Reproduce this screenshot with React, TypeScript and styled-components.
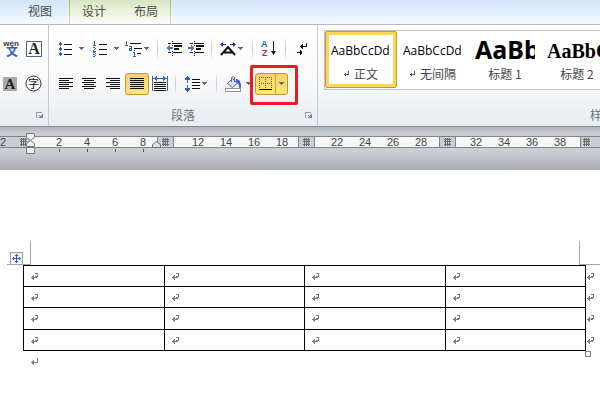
import React from "react";
import styled, { createGlobalStyle, css } from "styled-components";

const GlobalStyle = createGlobalStyle`
  * { box-sizing: border-box; }
  html { overflow: hidden; }
  body {
    margin: 0;
    background: #fff;
    font-family: "Liberation Sans", "Noto Sans CJK SC", sans-serif;
    font-size: 12px;
    line-height: 16px;
    color: #444;
  }
  button { font: inherit; color: inherit; border: 0; padding: 0; background: none; }
  svg { display: block; flex: none; }
`;

/* ---------- tabs ---------- */

const TabBar = styled.nav`
  display: flex;
  height: 25px;
  overflow: hidden;
  border-bottom: 1px solid #b4b8c2;
  background: linear-gradient(#d3e6fa, #e2effc 50%, #f7fbff);
`;

const Tab = styled.button`
  height: 21px;
  padding: 0 14px;
  font-family: "Noto Sans CJK SC", sans-serif;
  color: #4a4a4a;
`;

const MainTabs = styled.div`
  display: flex;
  padding-left: 14px;
  padding-right: 3px;
`;

const ContextTabs = styled.div`
  display: flex;
  border-style: solid;
  border-width: 0 1px;
  border-image: linear-gradient(#a9b04c, #dfe4b4) 1;
  background: linear-gradient(#d5e5bd, #ebf3df 50%, #fbfdf9);
  ${Tab} { padding: 0 12px; }
  ${Tab} + ${Tab} { padding-left: 16px; }
`;

/* ---------- ribbon ---------- */

const Ribbon = styled.section`
  display: flex;
  height: 101px;
  overflow: hidden;
  background: linear-gradient(#fff, #fbfbfc 45%, #f1f3f5 75%, #e8ecf0);
`;

const Group = styled.div<{ $w?: number }>`
  ${(p) => (p.$w ? css`flex: 0 0 ${p.$w}px;` : css`flex: 1 0 0; min-width: 0;`)}
  display: flex;
  flex-direction: column;
  border-right: ${(p) => (p.$w ? "1px solid #c3c9d1" : "0")};
`;

const ToolRow = styled.div`
  display: flex;
  align-items: center;
  height: 35px;
`;

const FirstRow = styled(ToolRow)`
  margin-top: 6px;
`;

const Tool = styled.button<{ $w: number; $gap?: number }>`
  display: flex;
  align-items: center;
  justify-content: space-between;
  flex: none;
  width: ${(p) => p.$w}px;
  height: 22px;
  margin-left: ${(p) => p.$gap ?? 0}px;
  padding: 0 2px;
`;

const gold = css`
  border: 1px solid #c2953c;
  border-radius: 3px;
  background: linear-gradient(#fbd272, #fddc70 60%, #fee978);
`;

const ActiveTool = styled(Tool)`
  ${gold}
  justify-content: center;
  padding: 0;
`;

const Divider = styled.span<{ $gap: number }>`
  flex: none;
  width: 1px;
  height: 20px;
  margin-left: ${(p) => p.$gap}px;
  background: linear-gradient(#ececf0, #c4c8ce 50%, #ececf0);
`;

const Split = styled.div`
  ${gold}
  position: relative;
  display: flex;
  width: 33px;
  height: 22px;
  margin-left: 2px;
`;

const SplitPart = styled.button<{ $w: number }>`
  display: flex;
  align-items: center;
  justify-content: center;
  width: ${(p) => p.$w}px;
  & + & { border-left: 1px solid #c9a04a; }
`;

const Highlight = styled.span`
  position: absolute;
  inset: -9px -11px -11px -6px;
  border: 3px solid #ed1c24;
  border-radius: 2px;
  pointer-events: none;
`;

const GroupFooter = styled.div`
  flex: 1;
  display: grid;
  grid-template-columns: 14px 1fr 14px;
  align-items: center;
  justify-items: center;
  padding: 3px 2px 0;
  font-family: "Noto Sans CJK SC", sans-serif;
  color: #6b7480;
`;

const Launcher = styled.button`
  grid-column: 3;
`;

const StyleLabel = styled.div`
  display: flex;
  align-items: center;
  justify-content: flex-end;
  height: 22px;
  margin-top: auto;
  margin-right: -14px;
  font-family: "Noto Sans CJK SC", sans-serif;
  color: #6b7480;
`;

/* ---------- style gallery ---------- */

const Gallery = styled.div`
  display: flex;
  height: 60px;
  margin: 5px 0 0 6px;
  overflow: hidden;
  border: 1px solid #c0c3c8;
  border-right: 0;
  background: #fff;
`;

const StyleCard = styled.button<{ $active?: boolean }>`
  flex: 0 0 72px;
  min-width: 0;
  display: flex;
  flex-direction: column;
  align-items: center;
  height: 57px;
  padding: 0 2px;
  border: 4px solid transparent;
  ${(p) =>
    p.$active &&
    css`
      border: 1px solid #c29a35;
      border-radius: 2px;
      box-shadow: inset 0 0 0 3px #fbd65f;
      padding: 3px 5px;
    `}
`;

const Sample = styled.span<{ $kind: "body" | "h1" | "h2" }>`
  width: 100%;
  height: 30px;
  overflow: hidden;
  white-space: nowrap;
  text-align: left;
  color: #000;
  ${(p) => p.$kind === "body" && css`font: 12px/32px "Open Sans", sans-serif;`}
  ${(p) => p.$kind === "h1" && css`font: bold 25px/28px "Noto Sans", sans-serif;`}
  ${(p) => p.$kind === "h2" && css`font: bold 20px/32px "Liberation Serif", serif;`}
`;

const StyleName = styled.span`
  display: flex;
  align-items: center;
  gap: 4px;
  height: 20px;
  white-space: nowrap;
  font-family: "Noto Sans CJK SC", sans-serif;
  color: #444;
`;

/* ---------- ruler ---------- */

const RulerArea = styled.div`
  height: 44px;
  padding-top: 9px;
  border-top: 1px solid #858b91;
  background: linear-gradient(#b0b5ba, #cbcfd4 7px, #cbcfd4 24px, #a8adb3);
`;

const Ruler = styled.div`
  position: relative;
  display: flex;
  height: 12px;
  border: solid #7d8590;
  border-width: 1px 0;
  background: #cbcfd5;
  font: 11px/10px "Liberation Sans", sans-serif;
  color: #444;
`;

const StartMargin = styled.div`
  flex: 0 0 31px;
  display: flex;
  align-items: center;
  justify-content: space-between;
  padding-right: 4px;
`;

const ColumnGap = styled.div`
  flex: 0 0 17px;
  display: flex;
  align-items: center;
  justify-content: center;
  border: solid #7d8590;
  border-width: 0 1px;
`;

const EndMargin = styled.div`
  flex: 0 0 22px;
  display: flex;
  align-items: center;
  padding-left: 2px;
  border-left: 1px solid #7d8590;
`;

const Span = styled.div<{ $pad: number }>`
  flex: 1 0 124px;
  display: flex;
  padding-left: ${(p) => p.$pad}px;
  background: #f7f7f8;
`;

const Mark = styled.span<{ $tick?: boolean }>`
  flex: 0 0 28px;
  display: flex;
  flex-direction: column;
  align-items: center;
  height: 10px;
  ${(p) =>
    p.$tick &&
    css`
      &::after {
        content: "";
        flex: none;
        width: 1px;
        height: 3px;
        margin-top: 2px;
        background: #555;
      }
    `}
`;

const IndentMarker = styled.span<{ $x: number; $y: number }>`
  position: absolute;
  left: ${(p) => p.$x}px;
  top: ${(p) => p.$y}px;
`;

/* ---------- document ---------- */

const Page = styled.main`
  padding-top: 71px;
  padding-left: 23px;
  background: #fff;
`;

const Corners = styled.div`
  display: flex;
  justify-content: space-between;
  height: 24px;
  margin-left: -16px;
`;

const Corner = styled.div<{ $right?: boolean }>`
  display: flex;
  align-items: flex-end;
  width: ${(p) => (p.$right ? 21 : 24)}px;
  padding-left: 3px;
  border-bottom: 1px solid #a8a8a8;
  ${(p) => (p.$right ? "border-left" : "border-right")}: 1px solid #a8a8a8;
`;

const Handle = styled.button`
  display: grid;
  place-items: center;
  width: 13px;
  height: 13px;
  margin-bottom: -1px;
  border: 1px solid #a0a0a0;
  background: #f3f4f6;
`;

const Table = styled.table`
  width: 100%;
  table-layout: fixed;
  border-collapse: collapse;
`;

const Cell = styled.td`
  height: 21px;
  padding: 0 0 0 7px;
  border: 1px solid #000;
  tr:nth-child(3) > & { height: 22px; }
`;

const EndCell = styled.td`
  padding: 0 0 0 1px;
`;

const AfterTable = styled.div`
  display: flex;
  align-items: flex-start;
  justify-content: space-between;
  padding: 0 9px 0 8px;
`;

const ResizeBox = styled.span`
  width: 6px;
  height: 6px;
  border: 1px solid #858585;
`;

const LastMark = styled.div`
  padding-top: 7px;
`;

/* ---------- drawings ---------- */

type DrawProps = { w: number; h: number; children: React.ReactNode; soft?: boolean };
const Draw = ({ w, h, children, soft }: DrawProps) => (
  <svg width={w} height={h} viewBox={`0 0 ${w} ${h}`} fill="none" shapeRendering={soft ? "auto" : "crispEdges"} aria-hidden="true">
    {children}
  </svg>
);

const Caret = () => (
  <Draw w={5} h={3}><path d="M0 0h5v1H0zM1 1h3v1H1zM2 2h1v1H2z" fill="#666" /></Draw>
);

const BLUE = "#2f5fc0";

const Bullets = () => (
  <Draw w={14} h={14}>
    <path d="M5 2.5h8M5 7.5h8M5 12.5h8" stroke="#111" />
    <path d="M0 1h3v2H0zM1 0h1v4H1zM0 6h3v2H0zM1 5h1v4H1zM0 11h3v2H0zM1 10h1v4H1z" fill={BLUE} />
  </Draw>
);

const Numbers = () => (
  <Draw w={15} h={16}>
    <path d="M6 3.5h8M6 8.5h8M6 13.5h8" stroke="#111" />
    <path d="M1 0h1v4h1v1H0V4h1V1H0zM0 6h2v1h1v1H2v1H1v1h2v1H0V9h1V8h1V7H0zM0 11h2v1h1v1H2v1h1v1H2v1H0v-1h2v-1H0v-1h2v-1H0z" fill={BLUE} />
  </Draw>
);

const Multilevel = () => (
  <Draw w={18} h={16}>
    <path d="M5 2.5h11M9 7.5h8M12 12.5h4" stroke="#111" />
    <path d="M1 0h1v4h1v1H0V4h1V1H0zM4 5h3v5H4V7h2V6H4zM5 8v1h1V8zM9 9h1v1H9zM8 11h2v4h1v1H8v-1h1v-3H8z" fill={BLUE} fillRule="evenodd" />
  </Draw>
);

const Dent = ({ inward }: { inward?: boolean }) => (
  <Draw w={16} h={15}>
    <path d="M2 2.5h3M7 2.5h9M2 11.5h3M7 11.5h9" stroke="#111" />
    <path d="M8 5h8M8 8h5" stroke="#111" strokeWidth="2" />
    <path d="M6.5 0v1M6.5 2v1M6.5 4v1M6.5 10v1M6.5 12v1M6.5 14v1" stroke="#111" />
    <path d={inward ? "M0 6h3V4l4 3-4 3V8H0z" : "M7 6H4V4L0 7l4 3V8h3z"} fill="#3f78d0" />
  </Draw>
);

const AsianLayout = () => (
  <Draw w={16} h={14} soft>
    <path d="M1 13L8 5l7 8M4 10.5h8" stroke="#111" strokeWidth="2" />
    <path d="M0 2.5L3 0v2h3v1H3v2zM16 2.5L13 0v2h-3v1h3v2z" fill="#1c2b9a" />
  </Draw>
);

const SortGlyph = styled.text`
  font: bold 9px "Liberation Sans", sans-serif;
`;

const Sort = () => (
  <Draw w={15} h={17} soft>
    <SortGlyph x="0" y="7" fill={BLUE}>A</SortGlyph>
    <SortGlyph x="1" y="16" fill="#a03838">Z</SortGlyph>
    <path d="M12.500 1v13" stroke="#111" />
    <path d="M10 11h5l-2.500 4z" fill="#111" />
  </Draw>
);

const ShowMarks = () => (
  <Draw w={10} h={12}>
    <path d="M9.500 0v4M3 3.500h6M5.500 1v5M4.500 2v3M0 9.500h5M3.500 7v5M4.500 8v3" stroke="#111" />
  </Draw>
);

const LINES: Record<string, string> = {
  left: "M0 .5h14M0 2.500h10M0 4.500h14M0 6.500h10M0 8.500h14M0 10.500h10",
  center: "M0 .5h14M2 2.500h10M0 4.500h14M2 6.500h10M0 8.500h14M2 10.500h10",
  right: "M0 .5h14M4 2.500h10M0 4.500h14M4 6.500h10M0 8.500h14M4 10.500h10",
  full: "M0 .5h14M0 2.500h14M0 4.500h14M0 6.500h14M0 8.500h14M0 10.500h14",
};
const Lines = ({ kind }: { kind: string }) => (
  <Draw w={14} h={11}><path d={LINES[kind]} stroke="#111" /></Draw>
);

const Distribute = () => (
  <Draw w={16} h={15}>
    <path d="M.5 0v15M15.500 0v15" stroke="#555f70" />
    <path d="M2 6.500h12M2 8.500h12M2 10.500h12M2 12.500h12M2 14.500h12" stroke="#111" />
    <path d="M1 2.500h14M3.500 1v3M4.500 0v5M12.500 1v3M11.500 0v5" stroke={BLUE} />
  </Draw>
);

const LineSpacing = () => (
  <Draw w={16} h={16}>
    <path d="M7 3.500h8M7 6.500h8M7 9.500h8M7 12.500h8" stroke="#111" />
    <path d="M2 0h1v1h1v1h1v2H3v3H2V4H0V2h1V1h1zM2 16h1v-1h1v-1h1v-2H3V9H2v3H0v2h1v1h1z" fill={BLUE} />
  </Draw>
);

const Bucket = () => (
  <Draw w={17} h={16} soft>
    <path d="M2.500 7.500l5-5 5 4.500-5 4.500z" fill="#d5e2f3" stroke="#56698a" />
    <path d="M6.500 6V1.500q1.500-2 3 0V6" stroke="#56657c" />
    <path d="M11 3q5 0 5 8-1 2-2 0 0-4-3-5z" fill={BLUE} />
    <rect x=".5" y="12.500" width="15" height="3" fill="#fff" stroke="#929292" />
  </Draw>
);

const Borders = () => (
  <Draw w={13} h={14}>
    <path d="M0 .5h13M0 6.500h13M.5 0v12M6.500 0v12M12.500 0v12" stroke="#555" strokeDasharray="1 1" />
    <path d="M0 12.500h13" stroke="#000" />
  </Draw>
);

const LauncherIcon = () => (
  <Draw w={7} h={7}>
    <path d="M0 .5h6M.5 0v6" stroke="#929aa3" />
    <path d="M3 6h4V2H6v1H5v1H4V3H3v1h1v1H3z" fill="#7c848e" />
  </Draw>
);

const IconText = styled.text<{ $size: number; $face?: "serif" | "sans" }>`
  font: bold ${(p) => p.$size}px
    ${(p) =>
      p.$face === "serif"
        ? '"Liberation Serif", serif'
        : p.$face === "sans"
          ? '"Liberation Sans", sans-serif'
          : '"Noto Sans CJK SC", sans-serif'};
  text-anchor: middle;
`;
const PlainGlyph = styled(IconText)`
  font-weight: normal;
`;

const Phonetic = () => (
  <Draw w={17} h={18} soft>
    <IconText $size={8} $face="sans" x="8" y="6" fill="#333">wén</IconText>
    <IconText $size={12} x="9" y="16" fill={BLUE}>文</IconText>
  </Draw>
);
const BoxedA = () => (
  <Draw w={16} h={16} soft>
    <rect x=".5" y=".5" width="15" height="15" fill="#fff" stroke="#4d6880" />
    <IconText $size={16} $face="serif" x="8" y="13" fill="#222">A</IconText>
  </Draw>
);
const ShadedA = () => (
  <Draw w={14} h={14} soft>
    <rect width="14" height="14" fill="#aaa" />
    <IconText $size={15} $face="serif" x="7" y="12" fill="#222">A</IconText>
  </Draw>
);
const CircledZi = () => (
  <Draw w={17} h={17} soft>
    <circle cx="8.500" cy="8.500" r="7.500" fill="#fff" stroke="#333" />
    <PlainGlyph $size={11} x="8.500" y="13" fill="#111">字</PlainGlyph>
  </Draw>
);

const HashMark = () => (
  <Draw w={7} h={8}>
    <path d="M1.500 0v8M3.500 0v8M5.500 0v8M0 1.500h7M0 3.500h7M0 6.500h7" stroke="#6c6c6c" />
  </Draw>
);

const CellMark = () => (
  <Draw w={7} h={7}>
    <path d="M4 .5h3M6.500 0v4M4 3.500h2M0 4.500h6M1.500 3v3M2.500 2v5" stroke="#808080" />
  </Draw>
);
const ParagraphMark = () => (
  <Draw w={7} h={7}>
    <path d="M6.500 0v5M0 4.500h7M1.500 3v3M2.500 2v5" stroke="#808080" />
  </Draw>
);
const SmallReturn = () => (
  <Draw w={6} h={6}>
    <path d="M4.500 0v4M0 3.500h5M1.500 2v3" stroke="#555" />
  </Draw>
);
const MoveArrows = () => (
  <Draw w={9} h={9}>
    <path d="M4.500 0v9M0 4.500h9M3 1.500h3M3 7.500h3M1.500 3v3M7.500 3v3" stroke="#2f62c8" />
  </Draw>
);
const HourglassMarker = () => (
  <Draw w={9} h={21} soft>
    <path d="M.5.5h8v4l-4 3-4-3zM.5 13.500v-3l4-3 4 3v3zM.5 14.500h8v6h-8z" fill="#eee" stroke="#7b7b7b" />
  </Draw>
);
const RightMarker = () => (
  <Draw w={9} h={7} soft><path d="M.5 6.500v-3l4-3 4 3v3z" fill="#ddd" stroke="#777" /></Draw>
);

/* ---------- app ---------- */

const segments = [
  { pad: 14, marks: [2, 4, 6, 8] },
  { pad: 10, marks: [12, 14, 16, 18] },
  { pad: 8, marks: [22, 24, 26, 28] },
  { pad: 6, marks: [32, 34, 36, 38] },
];

export default function App() {
  return (
    <>
      <GlobalStyle />
      <TabBar>
        <MainTabs><Tab>视图</Tab></MainTabs>
        <ContextTabs><Tab>设计</Tab><Tab>布局</Tab></ContextTabs>
      </TabBar>

      <Ribbon>
        <Group $w={49}>
          <FirstRow>
            <Tool $w={21} $gap={1} aria-label="拼音指南"><Phonetic /></Tool>
            <Tool $w={20} $gap={2} aria-label="字符边框"><BoxedA /></Tool>
          </FirstRow>
          <ToolRow>
            <Tool $w={20} $gap={1} aria-label="字符底纹"><ShadedA /></Tool>
            <Tool $w={21} $gap={2} aria-label="带圈字符"><CircledZi /></Tool>
          </ToolRow>
          <GroupFooter><Launcher aria-label="字体设置"><LauncherIcon /></Launcher></GroupFooter>
        </Group>

        <Group $w={269}>
          <FirstRow>
            <Tool $w={29} $gap={8} aria-label="项目符号"><Bullets /><Caret /></Tool>
            <Tool $w={30} $gap={5} aria-label="编号"><Numbers /><Caret /></Tool>
            <Tool $w={28} $gap={2} aria-label="多级列表"><Multilevel /><Caret /></Tool>
            <Divider $gap={6} />
            <Tool $w={20} $gap={6} aria-label="减少缩进量"><Dent /></Tool>
            <Tool $w={20} $gap={2} aria-label="增加缩进量"><Dent inward /></Tool>
            <Divider $gap={5} />
            <Tool $w={27} $gap={6} aria-label="中文版式"><AsianLayout /><Caret /></Tool>
            <Divider $gap={7} />
            <Tool $w={19} $gap={6} aria-label="排序"><Sort /></Tool>
            <Divider $gap={7} />
            <Tool $w={14} $gap={9} aria-label="显示编辑标记"><ShowMarks /></Tool>
          </FirstRow>
          <ToolRow>
            <Tool $w={18} $gap={8} aria-label="左对齐"><Lines kind="left" /></Tool>
            <Tool $w={18} $gap={5} aria-label="居中"><Lines kind="center" /></Tool>
            <Tool $w={18} $gap={6} aria-label="右对齐"><Lines kind="right" /></Tool>
            <ActiveTool $w={24} $gap={3} aria-label="两端对齐"><Lines kind="full" /></ActiveTool>
            <Tool $w={20} $gap={1} aria-label="分散对齐"><Distribute /></Tool>
            <Divider $gap={5} />
            <Tool $w={26} $gap={7} aria-label="行距"><LineSpacing /><Caret /></Tool>
            <Divider $gap={7} />
            <Tool $w={30} $gap={6} aria-label="底纹"><Bucket /><Caret /></Tool>
            <Split>
              <SplitPart $w={20} aria-label="边框"><Borders /></SplitPart>
              <SplitPart $w={12} aria-label="边框选项"><Caret /></SplitPart>
              <Highlight />
            </Split>
          </ToolRow>
          <GroupFooter>
            <span />
            <span>段落</span>
            <Launcher aria-label="段落设置"><LauncherIcon /></Launcher>
          </GroupFooter>
        </Group>

        <Group>
          <Gallery>
            <StyleCard $active><Sample $kind="body">AaBbCcDd</Sample><StyleName><SmallReturn />正文</StyleName></StyleCard>
            <StyleCard><Sample $kind="body">AaBbCcDd</Sample><StyleName><SmallReturn />无间隔</StyleName></StyleCard>
            <StyleCard><Sample $kind="h1">AaBb</Sample><StyleName>标题 1</StyleName></StyleCard>
            <StyleCard><Sample $kind="h2">AaBbC</Sample><StyleName>标题 2</StyleName></StyleCard>
          </Gallery>
          <StyleLabel>样式</StyleLabel>
        </Group>
      </Ribbon>

      <RulerArea>
        <Ruler>
          <StartMargin><span>2</span><HashMark /></StartMargin>
          {segments.map((s, i) => (
            <React.Fragment key={s.pad}>
              <Span $pad={s.pad}>
                {s.marks.map((n) => <Mark key={n} $tick={i === 0}>{n}</Mark>)}
              </Span>
              {i < 3 && <ColumnGap><HashMark /></ColumnGap>}
            </React.Fragment>
          ))}
          <EndMargin><HashMark /></EndMargin>
          <IndentMarker $x={26} $y={-4}><HourglassMarker /></IndentMarker>
          <IndentMarker $x={152} $y={4}><RightMarker /></IndentMarker>
        </Ruler>
      </RulerArea>

      <Page>
        <Corners>
          <Corner><Handle aria-label="移动表格"><MoveArrows /></Handle></Corner>
          <Corner $right />
        </Corners>
        <Table>
          <colgroup><col /><col /><col /><col /><col width="14" /></colgroup>
          <tbody>
            {[0, 1, 2, 3].map((r) => (
              <tr key={r}>
                {[0, 1, 2, 3].map((c) => <Cell key={c}><CellMark /></Cell>)}
                <EndCell><CellMark /></EndCell>
              </tr>
            ))}
          </tbody>
        </Table>
        <AfterTable>
          <LastMark><ParagraphMark /></LastMark>
          <ResizeBox />
        </AfterTable>
      </Page>
    </>
  );
}
